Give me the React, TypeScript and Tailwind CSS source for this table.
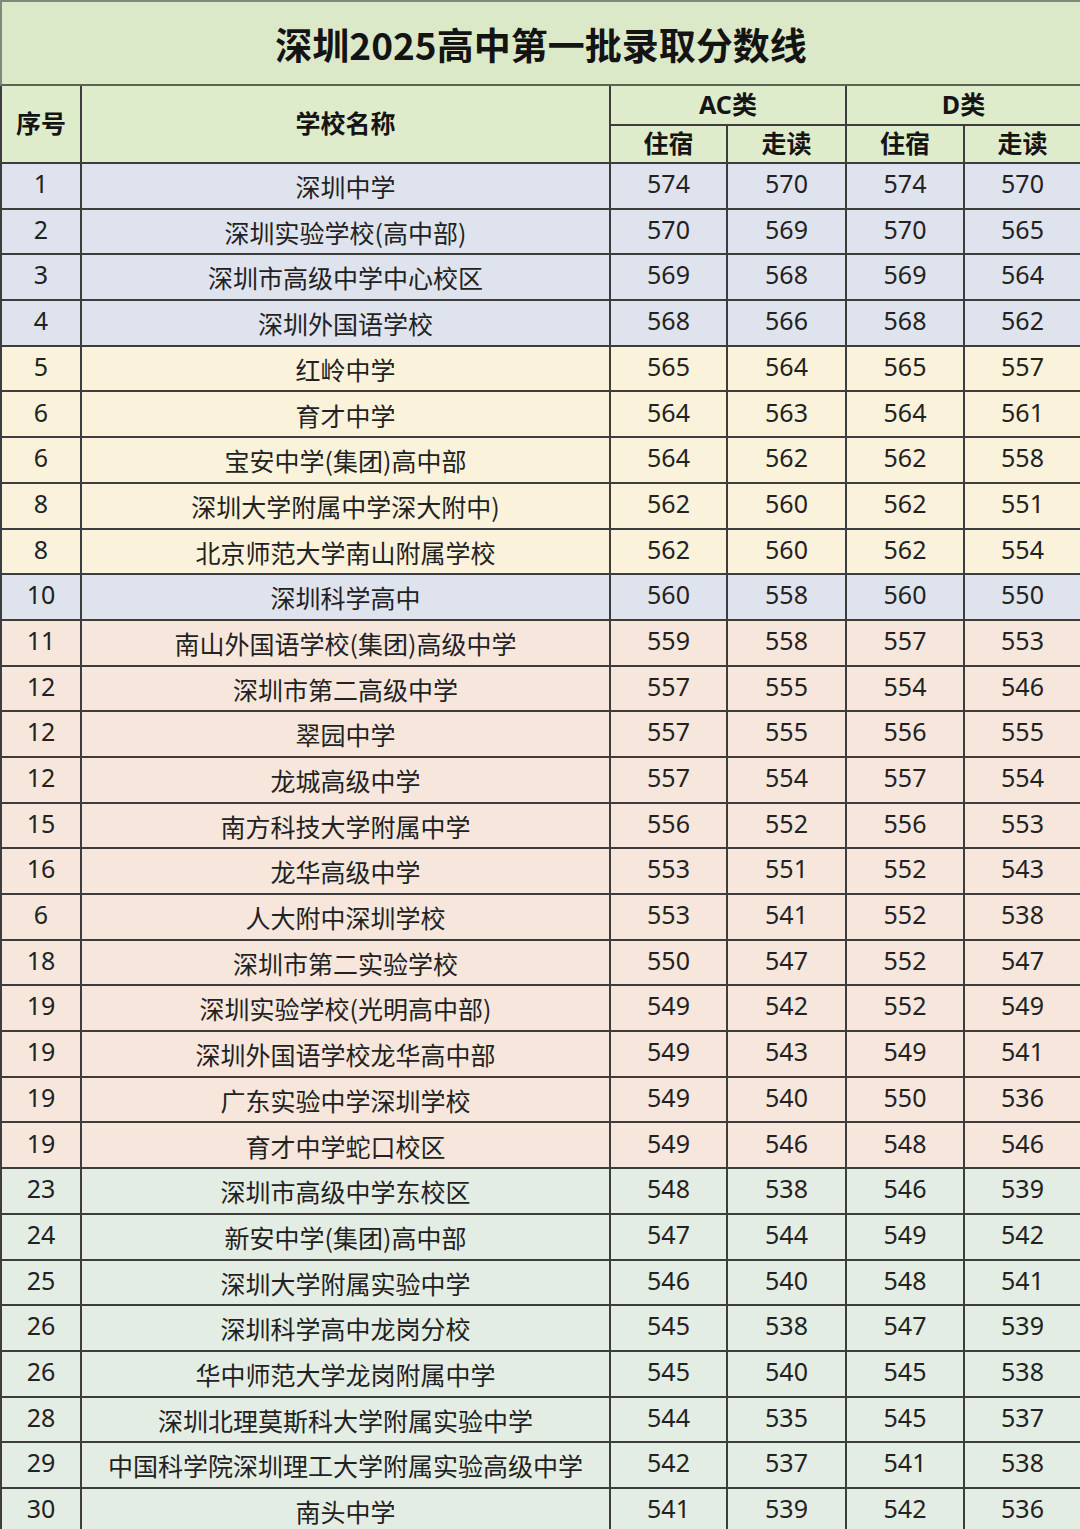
const rows: [string, string, number, number, number, number, string][] = [
  ['1', '深圳中学', 574, 570, 574, 570, 'b'],
  ['2', '深圳实验学校(高中部)', 570, 569, 570, 565, 'b'],
  ['3', '深圳市高级中学中心校区', 569, 568, 569, 564, 'b'],
  ['4', '深圳外国语学校', 568, 566, 568, 562, 'b'],
  ['5', '红岭中学', 565, 564, 565, 557, 'y'],
  ['6', '育才中学', 564, 563, 564, 561, 'y'],
  ['6', '宝安中学(集团)高中部', 564, 562, 562, 558, 'y'],
  ['8', '深圳大学附属中学深大附中)', 562, 560, 562, 551, 'y'],
  ['8', '北京师范大学南山附属学校', 562, 560, 562, 554, 'y'],
  ['10', '深圳科学高中', 560, 558, 560, 550, 'b'],
  ['11', '南山外国语学校(集团)高级中学', 559, 558, 557, 553, 'p'],
  ['12', '深圳市第二高级中学', 557, 555, 554, 546, 'p'],
  ['12', '翠园中学', 557, 555, 556, 555, 'p'],
  ['12', '龙城高级中学', 557, 554, 557, 554, 'p'],
  ['15', '南方科技大学附属中学', 556, 552, 556, 553, 'p'],
  ['16', '龙华高级中学', 553, 551, 552, 543, 'p'],
  ['6', '人大附中深圳学校', 553, 541, 552, 538, 'p'],
  ['18', '深圳市第二实验学校', 550, 547, 552, 547, 'p'],
  ['19', '深圳实验学校(光明高中部)', 549, 542, 552, 549, 'p'],
  ['19', '深圳外国语学校龙华高中部', 549, 543, 549, 541, 'p'],
  ['19', '广东实验中学深圳学校', 549, 540, 550, 536, 'p'],
  ['19', '育才中学蛇口校区', 549, 546, 548, 546, 'p'],
  ['23', '深圳市高级中学东校区', 548, 538, 546, 539, 'g'],
  ['24', '新安中学(集团)高中部', 547, 544, 549, 542, 'g'],
  ['25', '深圳大学附属实验中学', 546, 540, 548, 541, 'g'],
  ['26', '深圳科学高中龙岗分校', 545, 538, 547, 539, 'g'],
  ['26', '华中师范大学龙岗附属中学', 545, 540, 545, 538, 'g'],
  ['28', '深圳北理莫斯科大学附属实验中学', 544, 535, 545, 537, 'g'],
  ['29', '中国科学院深圳理工大学附属实验高级中学', 542, 537, 541, 538, 'g'],
  ['30', '南头中学', 541, 539, 542, 536, 'g'],
]

const bg: Record<string, string> = {
  b: 'bg-[#dfe3ee]',
  y: 'bg-[#faf2da]',
  p: 'bg-[#f6e6dc]',
  g: 'bg-[#e4ede3]',
}

const cell = 'flex items-center justify-center border-r-2 border-b-2 border-[#3d3d3d]'
const head = `${cell} bg-[#dfeccb] font-bold text-[25px] text-[#151515]`

export default function App() {
  return (
    <div
      className="w-[1080px] h-[1529px] overflow-hidden bg-white text-[#222]"
      style={{ fontFamily: '"Noto Sans", "Noto Sans CJK SC", sans-serif' }}
    >
      <div className="h-[86px] flex items-center justify-center bg-[#dce9c8] border-t-2 border-l-2 border-b-2 border-[#7d8a78] border-b-[#5a6356]">
        <h1 className="text-[37px] font-bold text-[#141414] pt-1" style={{ fontFamily: '"Noto Sans CJK SC", sans-serif' }}>
          深圳2025高中第一批录取分数线
        </h1>
      </div>
      <div className="grid grid-cols-[80px_529px_117px_119px_118px_117px] grid-rows-[40px_38px] border-l-2 border-[#3d3d3d]">
        <div className={`${head} row-span-2`}>序号</div>
        <div className={`${head} row-span-2`}>学校名称</div>
        <div className={`${head} col-span-2`}>AC类</div>
        <div className={`${head} col-span-2 border-r-0`}>D类</div>
        <div className={head}>住宿</div>
        <div className={head}>走读</div>
        <div className={head}>住宿</div>
        <div className={`${head} border-r-0`}>走读</div>
      </div>
      <div className="border-l-2 border-[#3d3d3d]">
        {rows.map((r, i) => (
          <div
            key={i}
            className={`grid grid-cols-[80px_529px_117px_119px_118px_117px] h-[45.7px] text-[25px] ${bg[r[6]]}`}
          >
            <div className={`${cell} pb-1`}>{r[0]}</div>
            <div className={`${cell} pt-[2px]`} style={{ fontFamily: '"Noto Sans CJK SC", sans-serif' }}>{r[1]}</div>
            <div className={`${cell} pb-1`}>{r[2]}</div>
            <div className={`${cell} pb-1`}>{r[3]}</div>
            <div className={`${cell} pb-1`}>{r[4]}</div>
            <div className={`${cell} pb-1 border-r-0`}>{r[5]}</div>
          </div>
        ))}
      </div>
    </div>
  )
}
